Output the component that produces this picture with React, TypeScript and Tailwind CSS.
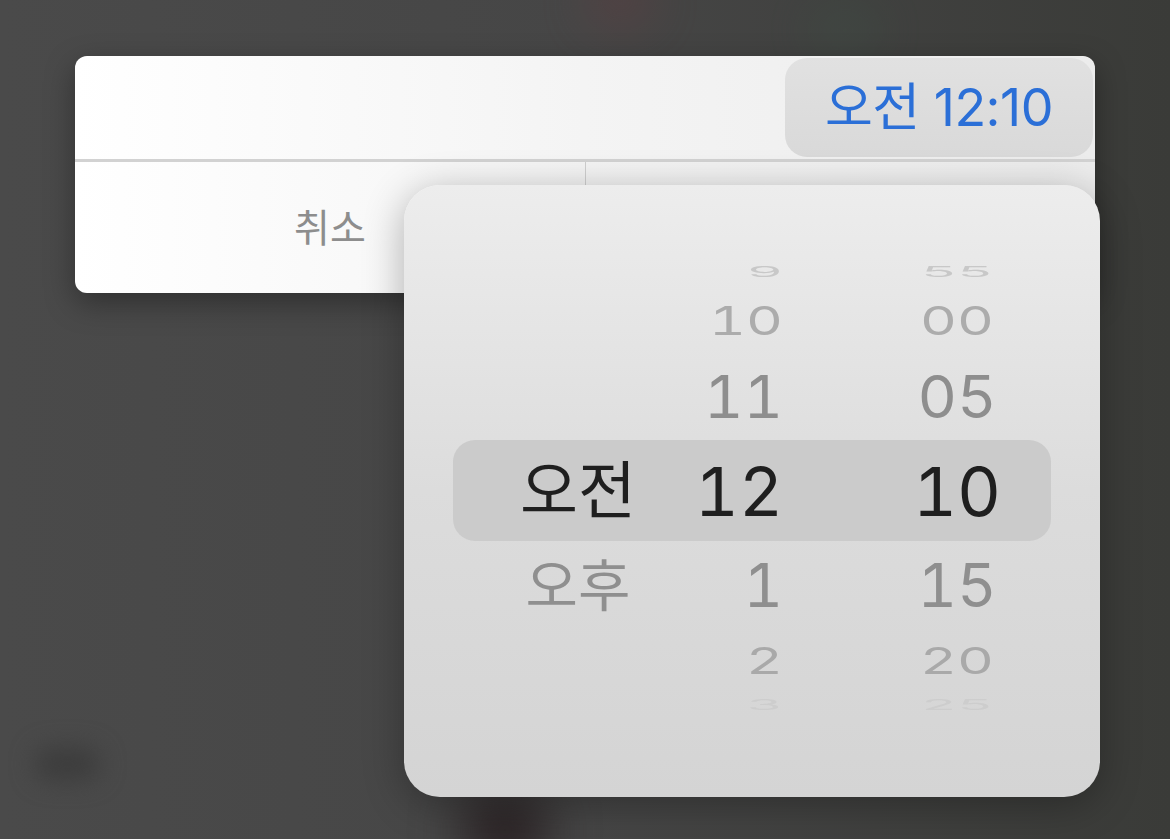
const font = { fontFamily: 'Inter, "Noto Sans CJK KR", sans-serif' };

type RowProps = {
  ampm?: string;
  hour: string;
  minute: string;
  className: string;
  textClass: string;
  squash: string;
  numSize: string;
  korSize?: string;
};

function PickerRow({ ampm, hour, minute, className, textClass, squash, numSize, korSize }: RowProps) {
  return (
    <div className={`flex items-center ${className} ${textClass}`}>
      <div className="w-[100px] shrink-0" />
      <div className={`w-[148px] shrink-0 text-center ${korSize ?? ''}`}>
        {ampm && <span className={`inline-block ${squash}`}>{ampm}</span>}
      </div>
      <div className={`w-[131px] shrink-0 text-right tabular-nums ${numSize}`}>
        <span className={`inline-block ${squash}`}>{hour}</span>
      </div>
      <div className="w-[109px] shrink-0" />
      <div className={`w-[130px] shrink-0 text-center tabular-nums ${numSize}`}>
        <span className={`inline-block ${squash}`}>{minute}</span>
      </div>
    </div>
  );
}

export default function App() {
  return (
    <div
      className="relative w-[1170px] h-[839px] overflow-hidden bg-gradient-to-r from-[#4a4a4a] via-[#464646] to-[#3a3b38]"
      style={font}
    >
      {/* blurred backdrop hints */}
      <div className="absolute left-[590px] top-[-20px] w-[60px] h-[40px] rounded-full bg-[#6b3a3f] blur-xl opacity-50" />
      <div className="absolute left-[810px] top-[10px] w-[70px] h-[40px] rounded-full bg-[#3d5446] blur-xl opacity-40" />
      <div className="absolute left-[35px] top-[748px] w-[65px] h-[32px] rounded-full bg-[#3c3c3c] blur-md" />
      <div className="absolute left-[460px] top-[795px] w-[90px] h-[70px] rounded-full bg-[#2a2224] blur-xl" />

      {/* alert card */}
      <div className="relative ml-[75px] pt-[56px]">
        <div className="w-[1020px] h-[237px] rounded-[12px] overflow-hidden flex flex-col bg-gradient-to-r from-white via-[#f4f4f4] to-[#ececec] shadow-[0_10px_30px_rgba(0,0,0,0.35)]">
          <div className="h-[103px] flex justify-end p-[2px]">
            <div className="w-[308px] rounded-[22px] bg-gradient-to-b from-[#e1e1e1] to-[#d9d9d9] flex items-center justify-center">
              <span className="text-[52px] leading-none text-[#2b6fd7] tracking-[-0.5px]">오전 12:10</span>
            </div>
          </div>
          <div className="h-[3px] bg-[#d2d2d2]" />
          <div className="flex-1 flex">
            <div className="w-[511px] flex items-center justify-center border-r-[1.5px] border-[#cfcfcf]">
              <span className="text-[39px] text-[#8d8d8d] leading-none">취소</span>
            </div>
            <div className="flex-1" />
          </div>
        </div>
      </div>

      {/* time picker popover */}
      <div className="absolute left-[404px] top-[185px] w-[696px] h-[612px] rounded-[36px] bg-gradient-to-b from-[#ededed] via-[#dcdcdc] to-[#d4d4d4] shadow-[0_8px_40px_rgba(0,0,0,0.3)] pt-[75px] leading-none">
        <PickerRow hour="9" minute="55" className="h-[24px]" textClass="text-[#c8c8c8]" squash="scale-y-[0.25]" numSize="text-[56px]" />
        <PickerRow hour="10" minute="00" className="h-[44px] mt-[14px]" textClass="text-[#acacac]" squash="scale-y-[0.69]" numSize="text-[57px]" />
        <PickerRow hour="11" minute="05" className="h-[64px] mt-[23px]" textClass="text-[#8e8e8e]" squash="scale-y-[0.96]" numSize="text-[61px]" />
        <div className="mx-[49px] mt-[11px] h-[101px] rounded-[22px] bg-[#cbcbcb]">
          <div className="-ml-[49px]">
            <PickerRow ampm="오전" hour="12" minute="10" className="h-[101px]" textClass="text-[#1f1f1f]" squash="" numSize="text-[68px]" korSize="text-[63px]" />
          </div>
        </div>
        <PickerRow ampm="오후" hour="1" minute="15" className="h-[64px] mt-[12px]" textClass="text-[#8f8f8f]" squash="scale-y-[0.98]" numSize="text-[61px]" korSize="text-[57px]" />
        <PickerRow hour="2" minute="20" className="h-[44px] mt-[21px]" textClass="text-[#a9a9a9]" squash="scale-y-[0.65]" numSize="text-[57px]" />
        <PickerRow hour="3" minute="25" className="h-[24px] mt-[11px]" textClass="text-[#cdcdcd]" squash="scale-y-[0.25]" numSize="text-[56px]" />
      </div>
    </div>
  );
}
